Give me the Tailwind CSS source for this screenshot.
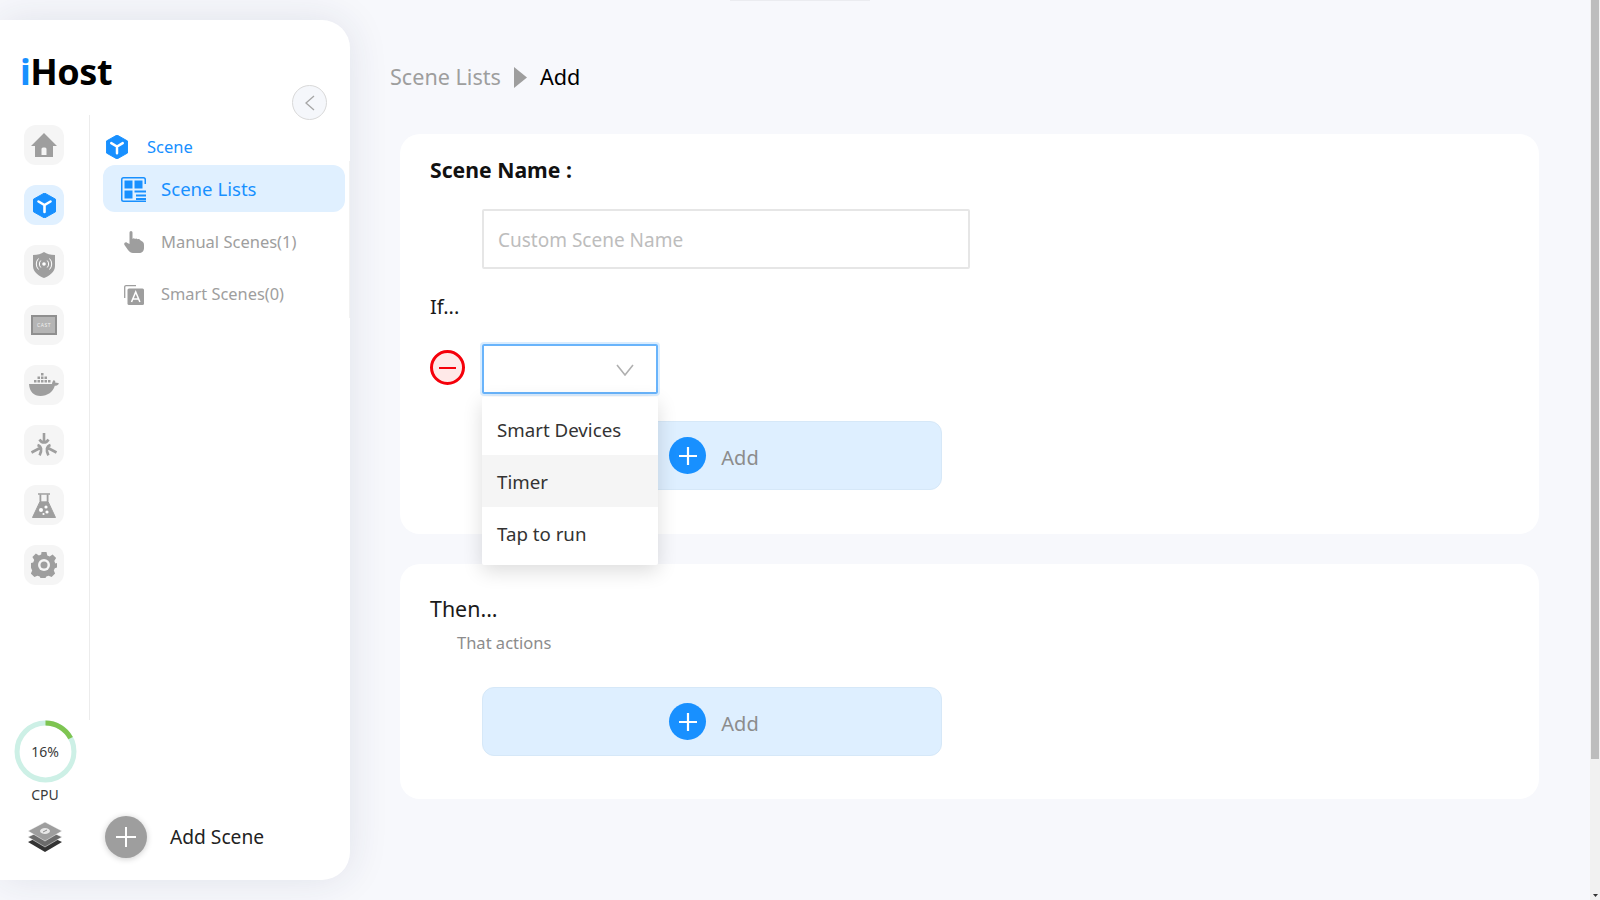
<!DOCTYPE html>
<html lang="en">
<head>
  <meta charset="UTF-8">
  <title>iHost</title>
  <script src="https://cdn.jsdelivr.net/npm/@tailwindcss/browser@4"></script>
</head>
<body class="bg-[#f7f8fc] font-['Noto_Sans',sans-serif] text-[#1a1a1a] overflow-hidden">
  <div class="flex h-[900px] w-[1600px] overflow-hidden">

    <!-- sidebar -->
    <aside class="w-[350px] h-[860px] mt-[20px] shrink-0 bg-white rounded-r-[28px] shadow-[0_0_40px_rgba(40,45,80,0.11)] flex flex-col relative">
      <div class="absolute right-0 top-[141px] w-px h-[157px] bg-[#f2f2f2]"></div>
      <div class="h-[95px] pl-[20px] pt-[29px] relative">
        <div class="text-[36px] leading-[46px] font-bold text-black tracking-[-0.5px]"><span class="text-[#1890ff]">i</span>Host</div>
        <button class="absolute left-[292px] top-[65px] w-[35px] h-[35px] rounded-full bg-[#f5f7fb] border border-[#d9d9d9] flex items-center justify-center">
          <svg width="12" height="16" viewBox="0 0 12 16" fill="none" stroke="#a6a6a6" stroke-width="1.300"><path d="M10 1 2 8l8 7"/></svg>
        </button>
      </div>

      <div class="flex h-[605px]">
        <!-- icon rail -->
        <nav class="w-[90px] shrink-0 border-r border-[#ececec] flex flex-col items-center pr-px pt-[10px] gap-[20px]">
          <div class="w-[40px] h-[40px] rounded-[12px] bg-[#f5f5f5] flex items-center justify-center">
            <svg width="28" height="28" viewBox="0 0 28 28" fill="#9e9e9e"><path d="M14 2 1 15h4v11h18V15h4zM11.500 24v-6a1.500 1.500 0 0 1 1.500-1.500h2a1.500 1.500 0 0 1 1.500 1.500v6z" fill-rule="evenodd"/></svg>
          </div>
          <div class="w-[40px] h-[40px] rounded-[12px] bg-[#e0f0ff] flex items-center justify-center">
            <svg width="23" height="25" viewBox="0 0 23 25"><path d="M11.500 0 22.500 6.200v12.600L11.500 25 .5 18.800V6.200z" fill="#1890ff" stroke="#1890ff" stroke-linejoin="round"/><path d="M5.500 8.500l6 3.500 6-3.500M11.500 12v7" fill="none" stroke="#fff" stroke-width="2.600" stroke-linecap="round"/></svg>
          </div>
          <div class="w-[40px] h-[40px] rounded-[12px] bg-[#f5f5f5] flex items-center justify-center">
            <svg width="22" height="26" viewBox="0 0 22 26"><path d="M11 0c3 2 6 3 11 3v11c0 6-6 10-11 12C6 24 0 20 0 14V3c5 0 8-1 11-3z" fill="#9e9e9e"/><circle cx="11" cy="12" r="1.800" fill="#fff"/><path d="M7.800 8.500a5 5 0 0 0 0 7M14.200 8.500a5 5 0 0 1 0 7M5.500 6.500a8 8 0 0 0 0 11M16.500 6.500a8 8 0 0 1 0 11" fill="none" stroke="#fff" stroke-width="1"/></svg>
          </div>
          <div class="w-[40px] h-[40px] rounded-[12px] bg-[#f5f5f5] flex items-center justify-center">
            <div class="w-[26px] h-[20px] border-2 border-[#8f8f8f] bg-[#b5b5b5] flex items-center justify-center text-[5px] leading-none text-[#f0f0f0] tracking-[0.5px]">CAST</div>
          </div>
          <div class="w-[40px] h-[40px] rounded-[12px] bg-[#f5f5f5] flex items-center justify-center">
            <svg width="30" height="24" viewBox="0 0 30 24" fill="#9e9e9e"><path d="M0 11h23c.3-2 1-3.500 2-4 1 .8 1.500 1.800 1.600 3 1 -.4 2.400 -.3 3.400 .4-.8 1.600-2.400 2.400-4.200 2.400C24 19 18.500 23 11.500 23 5 23 .5 19 0 11z"/><path d="M5 7h2.500v2.500H5zM8.500 7H11v2.500H8.500zM12 7h2.500v2.500H12zM15.500 7H18v2.500h-2.500zM19 7h2.500v2.500H19zM8.500 3.500H11V6H8.500zM12 3.500h2.500V6H12zM15.500 3.500H18V6h-2.500zM12 0h2.500v2.500H12z"/></svg>
          </div>
          <div class="w-[40px] h-[40px] rounded-[12px] bg-[#f5f5f5] flex items-center justify-center">
            <svg width="28" height="26" viewBox="0 0 28 26" fill="none" stroke="#9e9e9e" stroke-width="2.600"><path d="M14 1v10M9.500 7.500c1 1.800 2.500 3 4.500 3s3.500-1.200 4.500-3M1.500 20.500l8.500-4.500M7.500 13c1.800 .6 3.200 1.800 3.600 3.800.4 2-.2 4-1.500 6.500M26.500 20.500 18 16M20.500 13c-1.800 .6-3.200 1.800-3.600 3.800-.4 2 .2 4 1.500 6.500"/></svg>
          </div>
          <div class="w-[40px] h-[40px] rounded-[12px] bg-[#f5f5f5] flex items-center justify-center">
            <svg width="24" height="25" viewBox="0 0 24 25"><path d="M6 1h12" stroke="#9e9e9e" stroke-width="1.500"/><path d="M8 1.500v7L.5 24.500h23L16 8.500v-7" fill="#9e9e9e" stroke="#9e9e9e" stroke-width="1" stroke-linejoin="round"/><path d="M9.300 1.800h5.400v6.500H9.300z" fill="#f5f5f5"/><circle cx="9" cy="17" r="2" fill="#fff"/><circle cx="14" cy="14" r="1.600" fill="#fff"/><circle cx="15" cy="19" r="1.600" fill="#fff"/><circle cx="11.500" cy="21" r="1.100" fill="#fff"/></svg>
          </div>
          <div class="w-[40px] h-[40px] rounded-[12px] bg-[#f5f5f5] flex items-center justify-center">
            <svg width="26" height="26" viewBox="0 0 26 26"><path d="M10.500 0h5l.8 3.400 2.300 1 3-1.800 3.500 3.500-1.800 3 1 2.300L26 11v4.500l-2.200.8-1 2.300 1.300 3-3.500 3.400-3-1.300-2.300 .8-.8 1.500h-5l-.8-1.500-2.300-.8-3 1.300-3.500-3.400 1.300-3-1-2.300L0 15.500V11l2.200-.6 1-2.300-1.800-3 3.500-3.500 3 1.800 2.300-1z" fill="#9e9e9e"/><circle cx="13" cy="13" r="6" fill="#f5f5f5"/><circle cx="13" cy="13" r="3.500" fill="#9e9e9e"/></svg>
          </div>
        </nav>

        <!-- scene menu -->
        <div class="flex-1 pl-[13px] pr-[5px] pt-[17px] flex flex-col">
          <div class="h-[33px] pb-[3px] flex items-center pl-[3px] gap-[19px] text-[#1890ff] text-[16.5px]">
            <svg width="22" height="24" viewBox="0 0 23 25"><path d="M11.500 0 22.500 6.200v12.600L11.500 25 .5 18.800V6.200z" fill="#1890ff" stroke="#1890ff" stroke-linejoin="round"/><path d="M5.500 8.500l6 3.500 6-3.500M11.500 12v7" fill="none" stroke="#fff" stroke-width="2.600" stroke-linecap="round"/></svg>
            <span>Scene</span>
          </div>
          <div class="h-[47px] pt-[1px] rounded-[12px] bg-[#e0f0ff] flex items-center pl-[18px] gap-[15px] text-[#1890ff] text-[18.6px]">
            <svg width="25" height="25" viewBox="0 0 25 25" fill="#1890ff"><path d="M2.500 0h20A2.500 2.500 0 0 1 25 2.500V7h-1.500V2.500a1 1 0 0 0-1-1h-20a1 1 0 0 0-1 1v20a1 1 0 0 0 1 1H25V25H2.500A2.500 2.500 0 0 1 0 22.500v-20A2.500 2.500 0 0 1 2.500 0z"/><path d="M3.500 3.500h8v8h-8zM13.500 3.500h8v8h-8zM3.500 13.500h8v8h-8zM13.500 13.500H25v2H13.500zM15 17.500h10v2H15zM15 21h10v2H15z"/></svg>
            <span>Scene Lists</span>
          </div>
          <div class="h-[60px] flex items-center pl-[21px] gap-[17px] text-[#9e9e9e] text-[16.5px]">
            <svg width="20" height="22" viewBox="0 0 20 22" fill="#9e9e9e"><path d="M5.500 1.500a1.500 1.500 0 0 1 3 0V8c.5-1 2-1 2.500 0 .5-.8 2-.8 2.500.3.800-.6 2.200-.3 2.500.7L19 11c.7.8 1 1.800 1 3v3c0 3-2 5-5 5H9c-2 0-3.500-1-5-3l-3.500-5c-1-1.500 .8-3.500 2.500-2.300L5.500 13z"/></svg>
            <span>Manual Scenes(1)</span>
          </div>
          <div class="h-[45px] flex items-center pl-[21px] gap-[17px] text-[#9e9e9e] text-[16.4px]">
            <svg width="20" height="20" viewBox="0 0 20 20"><path d="M.7 13V2A1.300 1.300 0 0 1 2 .7h10" fill="none" stroke="#9e9e9e" stroke-width="1.300"/><rect x="3.500" y="3.500" width="16.500" height="16.500" rx="1.500" fill="#9e9e9e"/><path d="M7.500 17l4.200-10 4.200 10M9 14h5.500" fill="none" stroke="#fff" stroke-width="1.500"/></svg>
            <span>Smart Scenes(0)</span>
          </div>
        </div>
      </div>

      <!-- cpu -->
      <div class="w-[90px] h-[88px] flex flex-col items-center">
        <div class="relative w-[63px] h-[63px] flex items-center justify-center text-[14px] text-[#3a3a3a]">
          <svg class="absolute inset-0" width="63" height="63" viewBox="0 0 62 62" fill="none"><circle cx="31" cy="31" r="28" stroke="#cdf0e6" stroke-width="5"/><path d="M31 3a28 28 0 0 1 24.700 14.800" stroke="#7ec451" stroke-width="5"/></svg>
          <span>16%</span>
        </div>
        <div class="text-[14px] leading-[20px] mt-[2px] text-[#3a3a3a]">CPU</div>
      </div>

      <div class="flex items-center h-[44px] mt-[7px]">
        <div class="w-[90px] flex justify-center">
          <svg width="34" height="32" viewBox="0 0 34 32"><path d="M17 13 34 21 17 31 0 21z" fill="#333"/><path d="M17 8 34 16 17 26 0 16z" fill="#6b6b6b" stroke="#fff" stroke-width=".5"/><path d="M17 1 34 10 17 20 0 10z" fill="#9e9e9e" stroke="#fff" stroke-width=".5"/><ellipse cx="17" cy="10" rx="5" ry="3" fill="#e8e8e8"/><path d="M15 11l4-2" stroke="#8a8a8a"/></svg>
        </div>
        <div class="w-[42px] h-[42px] ml-[15px] rounded-full bg-[#9e9e9e] shadow-[0_1px_6px_rgba(0,0,0,0.2)] flex items-center justify-center">
          <svg width="22" height="22" viewBox="0 0 22 22" stroke="#fff" stroke-width="2"><path d="M11 1v20M1 11h20"/></svg>
        </div>
        <span class="ml-[23px] text-[19.2px] text-[#222]">Add Scene</span>
      </div>
    </aside>

    <!-- main -->
    <main class="flex-1 pl-[50px] pr-[51px] relative">
      <div class="absolute left-[380px] top-0 w-[140px] h-px bg-[#ebecf0]"></div>
      <div class="h-[134px] flex items-start pt-[60px] text-[21.6px] leading-[34px] -ml-[10px]">
        <span class="text-[#9e9e9e]">Scene Lists</span>
        <svg class="mx-[13px] mt-[7px]" width="13" height="21" viewBox="0 0 13 21" fill="#9e9e9e"><path d="M0 0l13 10.500L0 21z"/></svg>
        <span class="text-black">Add</span>
      </div>

      <section class="bg-white rounded-[20px] h-[400px] pl-[30px] pt-[20px] relative">
        <h2 class="text-[21.2px] leading-[32px] font-bold text-[#111]">Scene Name :</h2>
        <div class="ml-[52px] mt-[23px] w-[488px] h-[60px] border-2 border-[#e6e6e6] rounded-[2px] flex items-center pl-[14px] pt-[3px] text-[19px] text-[#bdbdbd]">Custom Scene Name</div>
        <div class="mt-[22px] text-[20px] leading-[32px]">If...</div>
        <div class="flex mt-[21px] items-start relative">
          <div class="w-[35px] h-[35px] mt-[6px] rounded-full border-[3px] border-[#f5000a] bg-[#ffe9e8] flex items-center justify-center">
            <div class="w-[17px] h-[2px] bg-[#f5000a]"></div>
          </div>
          <div class="ml-[17px] w-[176px] h-[50px] border-2 border-[#69b4fb] shadow-[0_0_0_2px_rgba(24,144,255,0.16)] rounded-[2px] flex items-center justify-end pr-[22px] pt-[2px]">
            <svg width="18" height="12" viewBox="0 0 18 12" fill="none" stroke="#b0b0b0" stroke-width="1.600"><path d="M1 1l8 10 8-10"/></svg>
          </div>
          <!-- dropdown -->
          <div class="absolute left-[52px] top-[53px] z-10 w-[176px] bg-white rounded-[2px] shadow-[0_6px_20px_rgba(0,0,0,0.14)] text-[18.7px] text-[#333] flex flex-col">
            <div class="h-[58px] pl-[15px] pt-[8px] flex items-center">Smart Devices</div>
            <div class="h-[52px] pl-[15px] pt-[2px] flex items-center bg-[#f5f5f5]">Timer</div>
            <div class="h-[58px] pl-[15px] pb-[4px] flex items-center">Tap to run</div>
          </div>
        </div>
        <button class="ml-[52px] mt-[27px] w-[460px] h-[69px] pl-[4px] rounded-[12px] bg-[#deefff] border border-[#d6e8f8] flex items-center justify-center gap-[15px] text-[20px] text-[#8c8c8c]">
          <span class="w-[37px] h-[37px] rounded-full bg-[#1890ff] flex items-center justify-center">
            <svg width="20" height="20" viewBox="0 0 20 20" stroke="#fff" stroke-width="2.200"><path d="M10 1v18M1 10h18"/></svg>
          </span>
          <span class="pt-[4px]">Add</span>
        </button>
      </section>

      <section class="bg-white rounded-[20px] h-[235px] mt-[30px] pl-[30px] pt-[29px]">
        <div class="text-[21.4px] leading-[32px]">Then...</div>
        <div class="ml-[27px] mt-[5px] text-[16.5px] leading-[26px] text-[#8c8c8c]">That actions</div>
        <button class="ml-[52px] mt-[31px] w-[460px] h-[69px] pl-[4px] rounded-[12px] bg-[#deefff] border border-[#d6e8f8] flex items-center justify-center gap-[15px] text-[20px] text-[#8c8c8c]">
          <span class="w-[37px] h-[37px] rounded-full bg-[#1890ff] flex items-center justify-center">
            <svg width="20" height="20" viewBox="0 0 20 20" stroke="#fff" stroke-width="2.200"><path d="M10 1v18M1 10h18"/></svg>
          </span>
          <span class="pt-[4px]">Add</span>
        </button>
      </section>
    </main>

    <!-- scrollbar -->
    <div class="w-[10px] shrink-0 bg-[#f1f1f1] flex flex-col justify-between items-center">
      <div class="w-[8px] h-[759px] bg-[#bdbdbd]"></div>
      <svg class="mb-[3px]" width="5" height="3" viewBox="0 0 5 3" fill="#333"><path d="M0 0h5L2.500 3z"/></svg>
    </div>
  </div>
</body>
</html>
